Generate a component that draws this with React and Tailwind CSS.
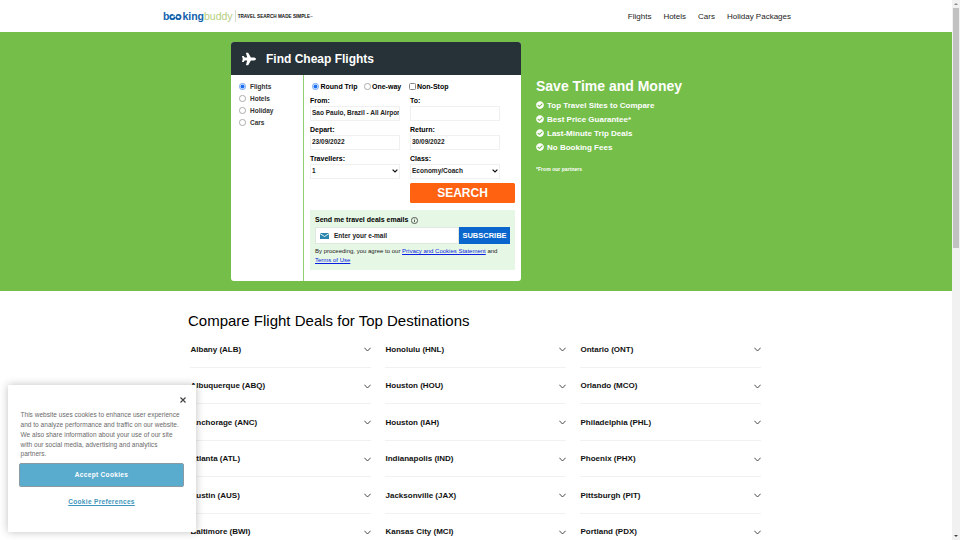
import React from "react";
import { FaPlane, FaCheckCircle } from "react-icons/fa";

const cities = [
  ["Albany (ALB)", "Albuquerque (ABQ)", "Anchorage (ANC)", "Atlanta (ATL)", "Austin (AUS)", "Baltimore (BWI)"],
  ["Honolulu (HNL)", "Houston (HOU)", "Houston (IAH)", "Indianapolis (IND)", "Jacksonville (JAX)", "Kansas City (MCI)"],
  ["Ontario (ONT)", "Orlando (MCO)", "Philadelphia (PHL)", "Phoenix (PHX)", "Pittsburgh (PIT)", "Portland (PDX)"],
];

function Radio({ on }) {
  return (
    <svg className="size-[7px] shrink-0" viewBox="0 0 7 7">
      <circle cx="3.5" cy="3.5" r="3.1" fill="#fff" stroke={on ? "#3b82f0" : "#8c8c8c"} strokeWidth=".7" />
      {on && <circle cx="3.5" cy="3.5" r="2" fill="#1a6ff0" />}
    </svg>
  );
}

function Logo() {
  return (
    <div className="flex h-[14px] items-center">
      <div className="flex items-baseline text-[10.5px] leading-[14px]">
        <span className="font-bold text-[#1262ad]">b</span>
        <svg className="h-[8px] w-[13px] self-center translate-y-[1px]" viewBox="0 0 13 8">
          <circle cx="3.4" cy="4" r="2.2" fill="none" stroke="#1262ad" strokeWidth="1.8" />
          <circle cx="9.4" cy="4" r="2.2" fill="none" stroke="#1262ad" strokeWidth="1.8" />
          <path d="M4.6 0h2.6v3.6H4.6z" fill="#fff" />
          <circle cx="5.4" cy="2.6" r=".7" fill="#2f83c4" />
        </svg>
        <span className="font-bold text-[#1262ad]">king</span>
        <span className="text-[#b5ce80]">buddy</span>
      </div>
      <div className="ml-[2px] h-[12px] w-px bg-[#d5dccb]" />
      <span className="ml-[2px] whitespace-nowrap pt-[2px] text-[4.65px] font-bold text-[#111]">TRAVEL SEARCH MADE SIMPLE<span className="text-[2.5px]">™</span></span>
    </div>
  );
}

function Field({ label, value, select }) {
  return (
    <div className="w-[90px]">
      <div className="h-[9px] text-[7px] leading-[9px] text-black">{label}</div>
      <div className="mt-[1px] flex h-[15px] items-center justify-between overflow-hidden border border-[#f0f0f0] pl-[1px] pr-px text-[6.5px] text-[#222]">
        <span className="whitespace-nowrap pb-[1px] leading-[12px]">{value}</span>
        {select && (
          <svg className="-mt-px h-[4px] w-[6px]" viewBox="0 0 6 4"><path d="M.6.6 3 3 5.4.6" fill="none" stroke="#111" strokeWidth="1.2" /></svg>
        )}
      </div>
    </div>
  );
}

function BookingCard() {
  return (
    <div className="flex h-[239px] w-[290px] flex-col overflow-hidden rounded-[3px] bg-white font-bold">
      <div className="flex h-[33px] items-center bg-[#263238] pl-[11px] text-white">
        <FaPlane className="h-[14px] w-[14px]" />
        <span className="ml-[10px] text-[12px]">Find Cheap Flights</span>
      </div>
      <div className="flex flex-1">
        <div className="w-[73px] border-r border-[#8fd070] pl-[8px] pt-[6px] text-[6.5px] text-[#333]">
          {["Flights", "Hotels", "Holiday", "Cars"].map((t, i) => (
            <div key={t} className="flex h-[12px] items-center">
              <div className="pb-[2px]"><Radio on={i === 0} /></div>
              <span className="ml-[4px]">{t}</span>
            </div>
          ))}
        </div>
        <div className="w-[217px] pl-[6px] pt-[6px]">
          <div className="flex h-[11px] items-center pl-[2px] text-[7px] text-black">
            <Radio on /><span className="ml-[1.5px] w-[43.5px] whitespace-nowrap pt-px">Round Trip</span>
            <Radio /><span className="ml-[1px] w-[37px] whitespace-nowrap pt-px">One-way</span>
            <span className="size-[7px] rounded-[1.5px] border border-[#888]" /><span className="ml-[1px] pt-px">Non-Stop</span>
          </div>
          <div className="mt-[4px] grid w-[190px] grid-cols-2 gap-x-[10px] gap-y-[4px]">
            <Field label="From:" value="Sao Paulo, Brazil - All Airpor" />
            <Field label="To:" value="" />
            <Field label="Depart:" value="23/09/2022" />
            <Field label="Return:" value="30/09/2022" />
            <Field label="Travellers:" value="1" select />
            <Field label="Class:" value="Economy/Coach" select />
          </div>
          <div className="ml-[100px] mt-[4px] flex h-[20px] w-[105px] items-center justify-center rounded-[1.5px] bg-[#ff6210] text-[12px] text-white">SEARCH</div>
          <div className="mt-[7px] h-[60px] w-[205px] bg-[#e6f7e6] pl-[5px] pt-[5px]">
            <div className="flex h-[10px] items-center text-[7px] text-black">
              Send me travel deals emails
              <svg className="ml-[2.5px] size-[7px]" viewBox="0 0 14 14" fill="none" stroke="#222" strokeWidth="1.4"><circle cx="7" cy="7" r="6.2" /><path d="M7 6v4.4M7 3.3v1.5" /></svg>
            </div>
            <div className="mt-[2px] flex h-[17px] w-[195px]">
              <div className="flex flex-1 items-center border border-[#dfe8df] bg-white pl-[4px] text-[6.5px] text-[#222]">
                <svg className="h-[6px] w-[9px]" viewBox="0 0 9 6"><path d="M0 0h9v6H0z" fill="#2b86ad" /><path d="M0 .6 4.5 3.5 9 .6" fill="none" stroke="#fff" strokeWidth=".9" /></svg>
                <span className="ml-[5px]">Enter your e-mail</span>
              </div>
              <div className="flex w-[51px] items-center justify-center bg-[#0a66cc] text-[7.5px] text-white">SUBSCRIBE</div>
            </div>
            <div className="mt-[3px] whitespace-nowrap text-[6px] font-normal leading-[9px] text-[#222]">
              By proceeding, you agree to our <a className="text-[#0b1fe0] underline">Privacy and Cookies Statement</a> and<br />
              <a className="text-[#0b1fe0] underline">Terms of Use</a>
            </div>
          </div>
        </div>
      </div>
    </div>
  );
}

function CookieBanner() {
  return (
    <div className="absolute left-[8px] top-[385px] h-[147px] w-[188px] rounded-[1px] bg-white pl-[12px] pt-[12px] shadow-[0_0_9px_rgba(0,0,0,0.25)]">
      <svg className="ml-[160px] size-[6px]" viewBox="0 0 6 6"><path d="M.5.5l5 5M5.5.5l-5 5" stroke="#444" strokeWidth="1.2" /></svg>
      <div className="ml-[0.5px] mt-[7px] whitespace-nowrap text-[6.5px] leading-[9.85px] tracking-[0.03px] text-[#696969]">
        This website uses cookies to enhance user experience<br />
        and to analyze performance and traffic on our website.<br />
        We also share information about your use of our site<br />
        with our social media, advertising and analytics<br />
        partners.
      </div>
      <div className="-ml-[1px] mt-[3.75px] flex h-[24px] w-[165px] items-center justify-center rounded-[2px] border border-[#8b9ba3] bg-[#5aaccf] text-[6.5px] font-bold tracking-[0.325px] text-white">Accept Cookies</div>
      <div className="mt-[10px] w-[163px] text-center text-[6.5px] font-bold leading-[9px] tracking-[0.325px] text-[#3d95bb] underline">Cookie Preferences</div>
    </div>
  );
}

export default function App() {
  return (
    <div className="relative flex h-[540px] w-[960px] overflow-hidden bg-white font-['Liberation_Sans',Arial,sans-serif] text-black">
      <div className="h-full w-[952px] overflow-hidden">
        <header className="flex h-[32px] items-center pl-[163px]">
          <Logo />
          <nav className="ml-auto mr-[161px] flex gap-[12px] pt-px text-[8px] text-[#222]">
            <span>Flights</span><span>Hotels</span><span>Cars</span><span>Holiday Packages</span>
          </nav>
        </header>
        <section className="flex h-[259px] bg-[#74be49] pl-[231px] pt-[10px]">
          <BookingCard />
          <div className="ml-[15px] pt-[36px] font-bold text-white">
            <h1 className="text-[14px] leading-[17px]">Save Time and Money</h1>
            <ul className="mt-[3px]">
              {["Top Travel Sites to Compare", "Best Price Guarantee*", "Last-Minute Trip Deals", "No Booking Fees"].map((t) => (
                <li key={t} className="flex h-[14px] items-center gap-[3px] text-[8px]"><FaCheckCircle className="size-[8px]" /><span className="pt-[1px]">{t}</span></li>
              ))}
            </ul>
            <p className="mt-[12px] text-[5.1px] leading-[6px]">*From our partners</p>
          </div>
        </section>
        <main className="pl-[188px] pt-[20px]">
          <h2 className="text-[15px] leading-[19px]">Compare Flight Deals for Top Destinations</h2>
          <div className="ml-[2px] mt-[1px] flex gap-[14px]">
            {cities.map((col) => (
              <div key={col[0]} className="w-[181px]">
                {col.map((c) => (
                  <div key={c} className="flex h-[36.5px] items-center justify-between border-b border-[#f1f1f1] pl-[0.5px] pt-[2px] text-[8px] font-bold text-[#111]">
                    {c}
                    <svg className="h-[5px] w-[7px]" viewBox="0 0 7 5"><path d="M.3.7 3.5 4 6.7.7" fill="none" stroke="#333" strokeWidth=".9" /></svg>
                  </div>
                ))}
              </div>
            ))}
          </div>
        </main>
      </div>
      <div className="flex h-full w-[8px] flex-col items-center bg-[#f1f1f1]">
        <div className="flex h-[8px] items-center"><svg className="h-[2px] w-[4px]" viewBox="0 0 4 2"><path d="M0 2 2 0l2 2z" fill="#888" /></svg></div>
        <div className="h-[240px] w-[6px] bg-[#c1c1c1]" />
        <div className="mt-auto flex h-[8px] items-center"><svg className="h-[2px] w-[4px]" viewBox="0 0 4 2"><path d="M0 0l2 2 2-2z" fill="#444" /></svg></div>
      </div>
      <CookieBanner />
    </div>
  );
}
